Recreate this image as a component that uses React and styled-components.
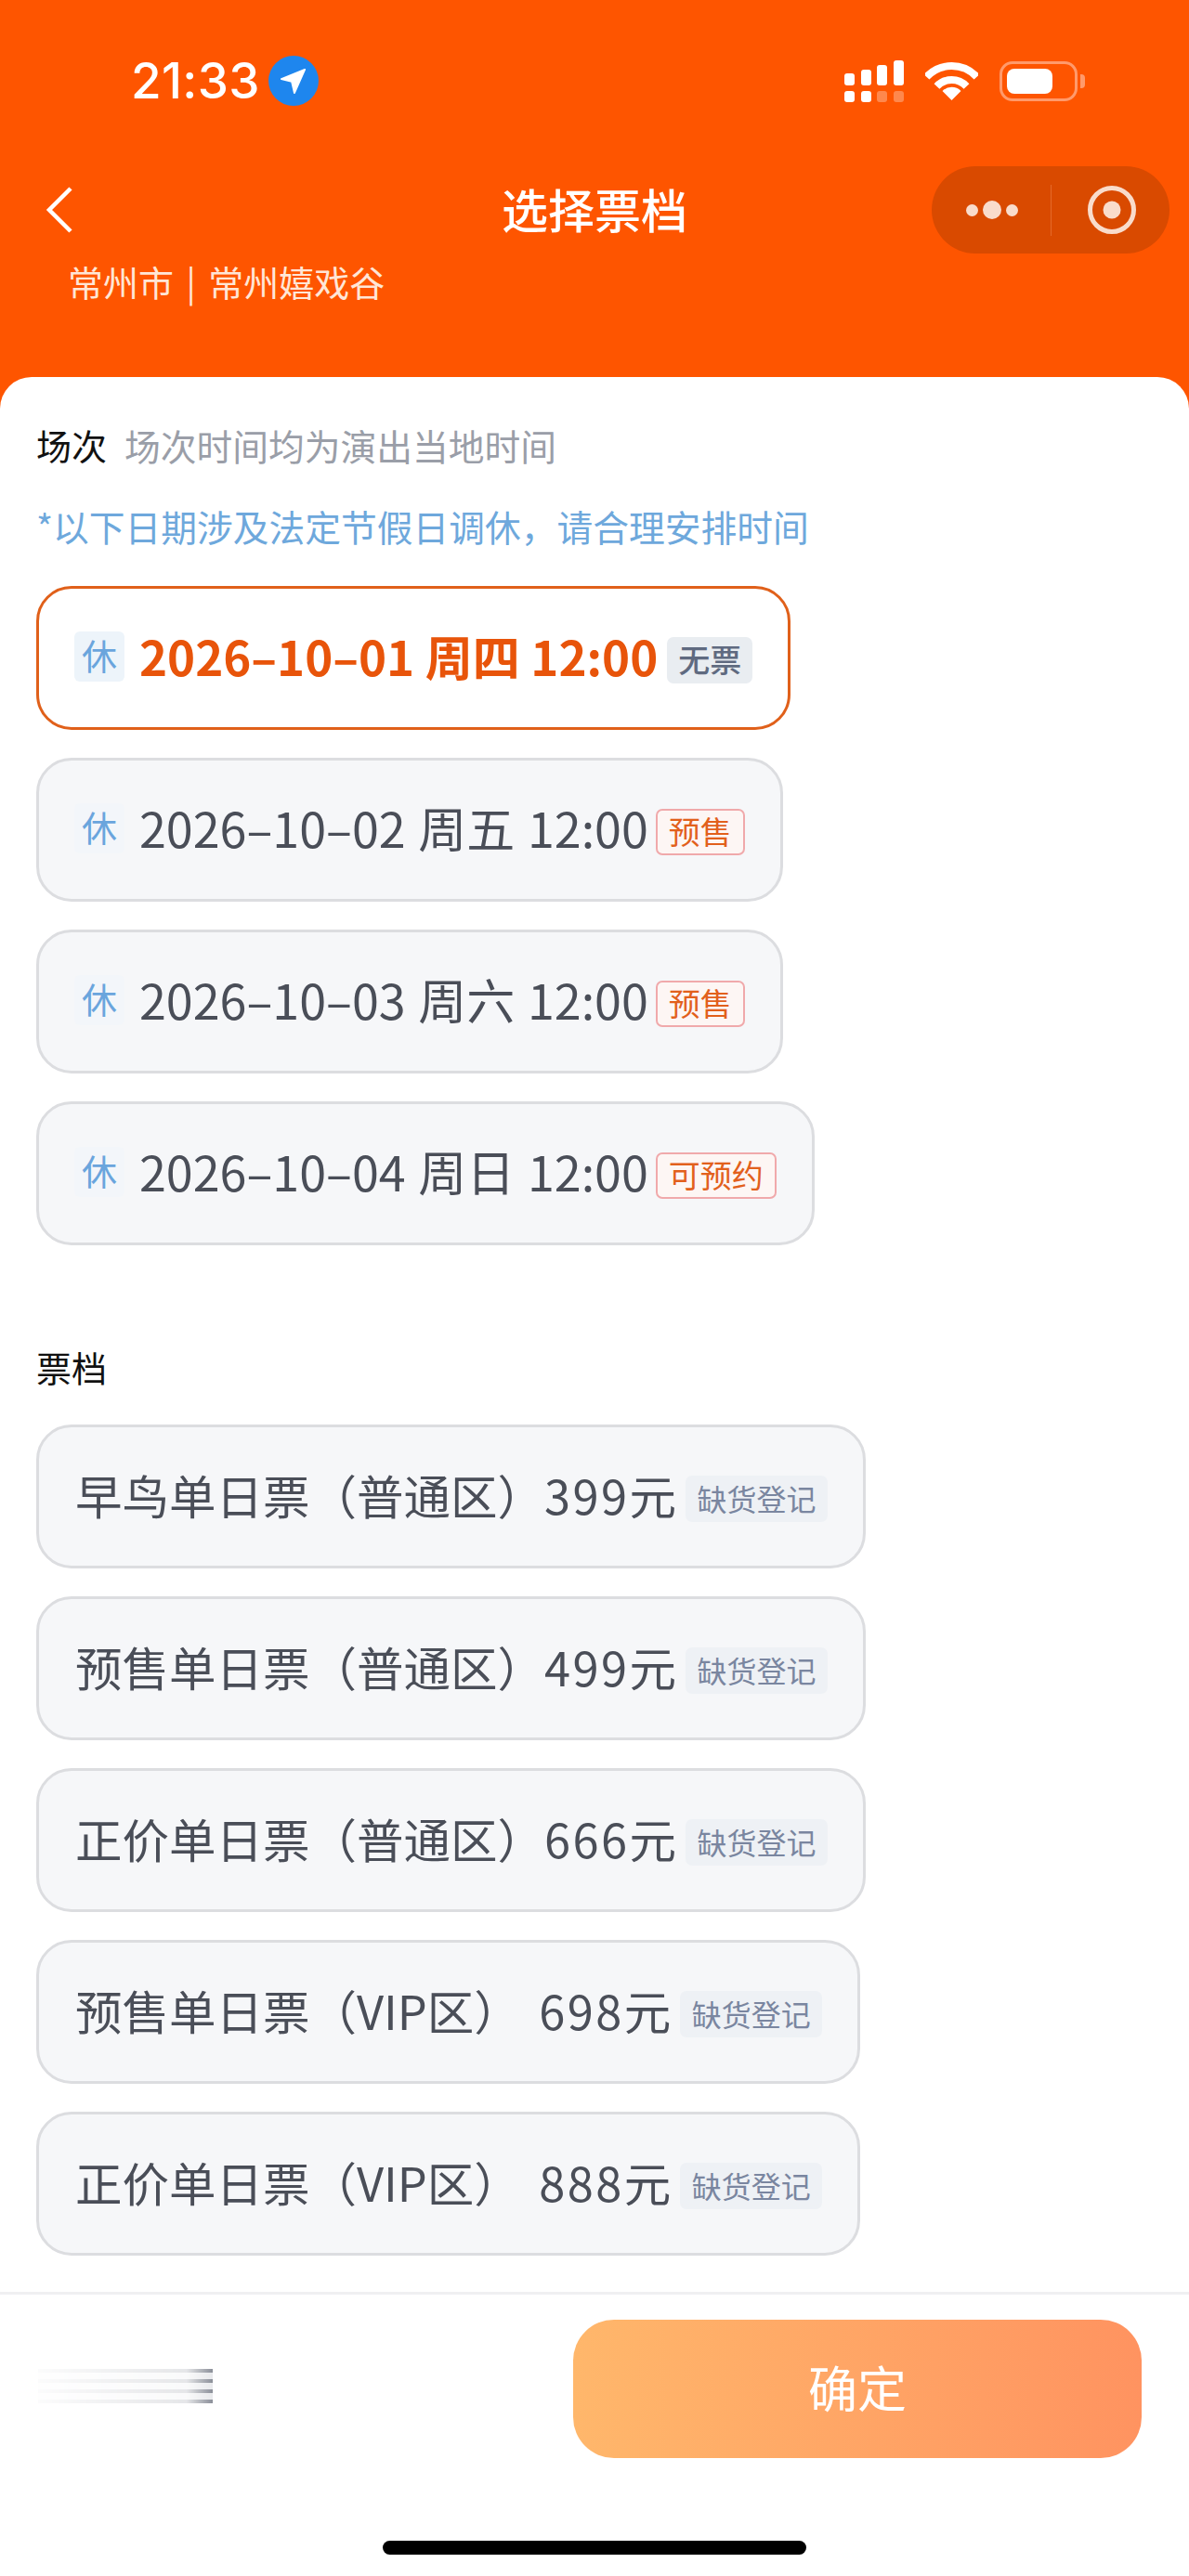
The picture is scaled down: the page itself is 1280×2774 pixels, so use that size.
import React from 'react';
import styled, { createGlobalStyle } from 'styled-components';

const GlobalStyle = createGlobalStyle`
  html, body {
    margin: 0;
    padding: 0;
    background: #fff;
  }
  * {
    box-sizing: border-box;
  }
`;

const FONT = '"Noto Sans CJK SC", "Noto Sans", sans-serif';

const sessions = [
  { date: '2026–10–01 周四 12:00', tag: '无票', kind: 'none', active: true },
  { date: '2026–10–02 周五 12:00', tag: '预售', kind: 'sale' },
  { date: '2026–10–03 周六 12:00', tag: '预售', kind: 'sale' },
  { date: '2026–10–04 周日 12:00', tag: '可预约', kind: 'sale' },
];

const tickets = [
  { name: '早鸟单日票（普通区）', price: '399' },
  { name: '预售单日票（普通区）', price: '499' },
  { name: '正价单日票（普通区）', price: '666' },
  { name: '预售单日票（VIP区） ', price: '698' },
  { name: '正价单日票（VIP区） ', price: '888' },
];

function SignalIcon() {
  return (
    <svg width="64" height="45" viewBox="0 0 64 45">
      <g fill="#fff">
        <rect x="0" y="14" width="11" height="13" rx="3" />
        <rect x="18" y="10" width="11" height="17" rx="3" />
        <rect x="35" y="5" width="11" height="22" rx="3" />
        <rect x="53" y="0" width="11" height="27" rx="3" />
        <rect x="0" y="33" width="11" height="12" rx="3" />
        <rect x="18" y="33" width="11" height="12" rx="3" />
        <rect x="35" y="33" width="11" height="12" rx="3" opacity="0.3" />
        <rect x="53" y="33" width="11" height="12" rx="3" opacity="0.3" />
      </g>
    </svg>
  );
}

function WifiIcon() {
  return (
    <svg width="57" height="42" viewBox="0 0 57 42">
      <path d="M1.5 16.8 A37 37 0 0 1 55.5 16.8" fill="none" stroke="#fff" strokeWidth="8" />
      <path d="M12.5 27 A22 22 0 0 1 44.5 27" fill="none" stroke="#fff" strokeWidth="8" />
      <path d="M28.5 42 L18.5 32 A14 14 0 0 1 38.5 32 Z" fill="#fff" />
    </svg>
  );
}

function BatteryIcon() {
  return (
    <BatteryWrap>
      <BatteryBody>
        <BatteryFill />
      </BatteryBody>
      <BatteryNub />
    </BatteryWrap>
  );
}

function LocationIcon() {
  return (
    <svg width="28" height="28" viewBox="0 0 30 30">
      <path d="M28 2 L1 13 L13 16 L16 29 Z" fill="#fff" strokeLinejoin="round" stroke="#fff" strokeWidth="2" />
    </svg>
  );
}

function App() {
  return (
    <Page>
      <GlobalStyle />
      <Header>
        <StatusBar>
          <TimeGroup>
            <Time>21:33</Time>
            <LocationDot>
              <LocationIcon />
            </LocationDot>
          </TimeGroup>
          <StatusIcons>
            <SignalIcon />
            <WifiIcon />
            <BatteryIcon />
          </StatusIcons>
        </StatusBar>
        <NavBar>
          <BackButton>
            <svg width="30" height="52" viewBox="0 0 30 52">
              <path d="M27 3 L4 26 L27 49" fill="none" stroke="#fff" strokeWidth="4.5" />
            </svg>
          </BackButton>
          <Title>选择票档</Title>
          <Capsule>
            <MoreDots>
              <Dot $size={13} />
              <Dot $size={20} />
              <Dot $size={13} />
            </MoreDots>
            <CapsuleDivider />
            <svg width="54" height="54" viewBox="0 0 54 54">
              <circle cx="27" cy="27" r="23.5" fill="none" stroke="#f9dccb" strokeWidth="5" />
              <circle cx="27" cy="27" r="9.5" fill="#f9dccb" />
            </svg>
          </Capsule>
        </NavBar>
        <Venue>常州市 | 常州嬉戏谷</Venue>
      </Header>

      <Sheet>
        <Content>
          <SectionRow>
            <SectionTitle>场次</SectionTitle>
            <SectionHint>场次时间均为演出当地时间</SectionHint>
          </SectionRow>
          <Notice>*以下日期涉及法定节假日调休，请合理安排时间</Notice>
          <OptionList $top={40}>
            {sessions.map((s) => (
              <Option key={s.date} $active={s.active}>
                <RestBadge $active={s.active}>休</RestBadge>
                <DateText $active={s.active}>{s.date}</DateText>
                <Tag $kind={s.kind}>{s.tag}</Tag>
              </Option>
            ))}
          </OptionList>

          <TicketHeading>票档</TicketHeading>
          <OptionList $top={37}>
            {tickets.map((t) => (
              <TicketOption key={t.name}>
                <TicketText>
                  {t.name}
                  <Price>{t.price}</Price>元
                </TicketText>
                <Tag $kind="soldout">缺货登记</Tag>
              </TicketOption>
            ))}
          </OptionList>
        </Content>

        <Footer>
          <FooterRow>
            <BlurredPrice />
            <ConfirmButton>确定</ConfirmButton>
          </FooterRow>
          <HomeIndicator />
        </Footer>
      </Sheet>
    </Page>
  );
}

const Page = styled.div`
  width: 1280px;
  height: 2774px;
  display: flex;
  flex-direction: column;
  background: #fe5500;
  font-family: ${FONT};
  overflow: hidden;
`;

const Header = styled.div`
  height: 406px;
  flex-shrink: 0;
  padding-top: 60px;
  color: #fff;
`;

const StatusBar = styled.div`
  height: 54px;
  display: flex;
  align-items: center;
  justify-content: space-between;
  padding: 0 112px 0 141px;
`;

const TimeGroup = styled.div`
  display: flex;
  align-items: center;
  gap: 9px;
`;

const Time = styled.div`
  font-family: Inter, sans-serif;
  font-size: 53px;
  font-weight: 500;
  letter-spacing: 0.3px;
  line-height: 54px;
`;

const LocationDot = styled.div`
  width: 54px;
  height: 54px;
  border-radius: 50%;
  background: #1e86ee;
  display: flex;
  align-items: center;
  justify-content: center;
`;

const StatusIcons = styled.div`
  display: flex;
  align-items: center;
  gap: 23px;
`;

const BatteryWrap = styled.div`
  display: flex;
  align-items: center;
  gap: 3px;
`;

const BatteryBody = styled.div`
  width: 84px;
  height: 43px;
  border: 3px solid #ff9a6b;
  border-radius: 14px;
  padding: 5px;
`;

const BatteryFill = styled.div`
  width: 49px;
  height: 100%;
  background: #fff;
  border-radius: 8px;
`;

const BatteryNub = styled.div`
  width: 5px;
  height: 15px;
  background: #ff9a6b;
  border-radius: 0 4px 4px 0;
`;

const NavBar = styled.div`
  position: relative;
  margin-top: 65px;
  height: 94px;
  display: flex;
  align-items: center;
  justify-content: center;
`;

const BackButton = styled.div`
  position: absolute;
  left: 49px;
  top: 21px;
  display: flex;
`;

const Title = styled.div`
  font-size: 50px;
  font-weight: 500;
  line-height: 90px;
  padding-bottom: 4px;
`;

const Capsule = styled.div`
  position: absolute;
  right: 21px;
  top: 0;
  width: 256px;
  height: 94px;
  border-radius: 47px;
  background: #d94a00;
  display: flex;
  align-items: center;
  padding-left: 37px;
`;

const MoreDots = styled.div`
  display: flex;
  align-items: center;
  gap: 5px;
  width: 91px;
`;

const Dot = styled.span`
  width: ${(p) => p.$size}px;
  height: ${(p) => p.$size}px;
  border-radius: 50%;
  background: #f9dccb;
`;

const CapsuleDivider = styled.div`
  width: 1px;
  height: 55px;
  background: #e56a2a;
  margin-right: 38px;
`;

const Venue = styled.div`
  margin-top: 5px;
  padding-left: 73px;
  font-size: 38px;
  line-height: 50px;
  word-spacing: 5px;
  color: #ffe6d6;
`;

const Sheet = styled.div`
  flex: 1;
  display: flex;
  flex-direction: column;
  background: #fff;
  border-radius: 34px 34px 0 0;
`;

const Content = styled.div`
  flex: 1;
  padding: 48px 0 0 39px;
`;

const SectionRow = styled.div`
  display: flex;
  align-items: center;
  gap: 19px;
  height: 50px;
`;

const SectionTitle = styled.div`
  font-size: 38px;
  color: #111;
  line-height: 50px;
`;

const SectionHint = styled.div`
  font-size: 38.75px;
  color: #9a9ea8;
  line-height: 50px;
`;

const Notice = styled.div`
  margin-top: 37px;
  font-size: 38.75px;
  line-height: 50px;
  color: #6ea8dc;
`;

const OptionList = styled.div`
  display: flex;
  flex-direction: column;
  align-items: flex-start;
  gap: 30px;
  margin-top: ${(p) => p.$top}px;
`;

const Option = styled.div`
  height: 155px;
  display: inline-flex;
  align-items: center;
  padding: 0 38px;
  border-radius: 38px;
  border: ${(p) => (p.$active ? '3px solid #e0601a' : '3px solid #dcdde0')};
  background: ${(p) => (p.$active ? '#fff' : '#f6f7f9')};
`;

const RestBadge = styled.div`
  width: 54px;
  height: 54px;
  margin: 0 16px 4px 0;
  border-radius: 6px;
  background: ${(p) => (p.$active ? '#edf4fa' : '#f3f6fa')};
  color: #6aa5dd;
  font-size: 38px;
  line-height: 50px;
  text-align: center;
  flex-shrink: 0;
`;

const DateText = styled.div`
  font-size: ${(p) => (p.$active ? 51 : 52)}px;
  line-height: 60px;
  padding-bottom: 6px;
  white-space: nowrap;
  word-spacing: ${(p) => (p.$active ? 0 : 2)}px;
  font-weight: ${(p) => (p.$active ? 700 : 400)};
  color: ${(p) => (p.$active ? '#e8540a' : '#4a4e58')};
`;

const tagStyles = {
  none: 'margin-left: 10px; padding: 0 10px; background: #e9edf1; color: #5f6a80; border: 2px solid #e9edf1; font-size: 34px; font-weight: 500;',
  sale: 'margin-left: 8px; padding: 0 12px; background: #fdf6f4; color: #e2601c; border: 2px solid #f0a9ab; font-size: 34px;',
  soldout: 'margin-left: 10px; padding: 0 10.5px; background: #eef1f5; color: #7a86a0; border: 2px solid #eef1f5; font-size: 32px;',
};

const Tag = styled.div`
  margin-top: 4px;
  height: 50px;
  border-radius: 7px;
  line-height: 44px;
  white-space: nowrap;
  flex-shrink: 0;
  ${(p) => tagStyles[p.$kind]}
`;

const TicketHeading = styled.div`
  margin-top: 106px;
  font-size: 38px;
  line-height: 50px;
  color: #111;
`;

const TicketOption = styled(Option)`
  padding: 0 38px 0 39px;
  border-color: #dcdde0;
`;

const TicketText = styled.div`
  font-size: 50.5px;
  line-height: 60px;
  padding-bottom: 6px;
  color: #4a4e58;
  white-space: pre;
  word-spacing: 8px;
`;

const Price = styled.span`
  letter-spacing: 2.5px;
`;

const Footer = styled.div`
  height: 306px;
  border-top: 3px solid #f0f0f2;
  display: flex;
  flex-direction: column;
  align-items: center;
  padding-top: 27px;
`;

const FooterRow = styled.div`
  width: 100%;
  display: flex;
  align-items: center;
  justify-content: space-between;
  padding: 0 51px 0 41px;
`;

const BlurredPrice = styled.div`
  width: 188px;
  height: 37px;
  margin-top: -6px;
  background: repeating-linear-gradient(180deg, #8b8f99 0 4px, #e8e9ec 4px 11px);
  -webkit-mask-image: linear-gradient(90deg, rgba(0, 0, 0, 0.03), rgba(0, 0, 0, 0.22) 85%, #000);
  mask-image: linear-gradient(90deg, rgba(0, 0, 0, 0.03), rgba(0, 0, 0, 0.22) 85%, #000);
`;

const ConfirmButton = styled.div`
  width: 612px;
  height: 149px;
  padding-bottom: 6px;
  border-radius: 44px;
  background: linear-gradient(90deg, #ffb76b, #ff9360);
  color: #fff;
  font-size: 53px;
  display: flex;
  align-items: center;
  justify-content: center;
`;

const HomeIndicator = styled.div`
  width: 456px;
  height: 15px;
  margin-top: 89px;
  border-radius: 8px;
  background: #000;
`;

export default App;
